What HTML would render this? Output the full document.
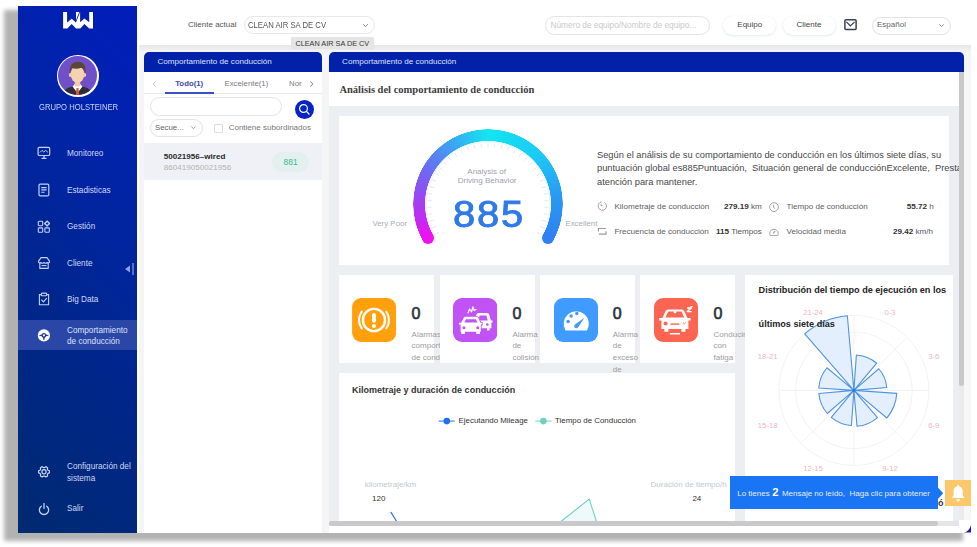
<!DOCTYPE html>
<html><head><meta charset="utf-8">
<style>
*{margin:0;padding:0;box-sizing:border-box}
html,body{width:977px;height:547px;overflow:hidden;background:#fff;font-family:"Liberation Sans",sans-serif;color:#333}
.a{position:absolute}
.t{position:absolute;white-space:nowrap;line-height:1}
#win{position:absolute;left:18px;top:6px;width:953px;height:527px;background:#fff;overflow:hidden}
#side{position:absolute;left:18px;top:6px;width:119px;height:527px;background:linear-gradient(225deg,#011dbb 0%,#0124a6 30%,#00268c 60%,#002a70 100%)}
.mi{position:absolute;left:67px;color:#cfd8f5;font-size:8.2px;line-height:11.5px;white-space:nowrap}
.ic{position:absolute;left:37px}
</style></head>
<body>
<div class="a" style="left:3.5px;top:10px;width:959.5px;height:531px;background:rgba(0,0,0,0.3);filter:blur(2.3px)"></div>
<div id="win"></div>
<!-- content bg -->
<div class="a" style="left:137px;top:45px;width:834px;height:488px;background:#f5f5f6"></div>
<div class="a" style="left:137px;top:45px;width:834px;height:7px;background:linear-gradient(#e7e7e7,#f4f4f5)"></div>
<div class="a" style="left:137px;top:45px;width:2px;height:488px;background:#fff"></div>
<!-- top bar -->
<div class="a" style="left:137px;top:6px;width:834px;height:39px;background:#fff"></div>


<!-- top bar content -->
<div class="t" style="left:188px;top:21px;font-size:8px;color:#555">Cliente actual</div>
<div class="a" style="left:243.5px;top:16.3px;width:131.2px;height:18.2px;border:1px solid #e6e8f0;border-radius:9.5px;background:#fff"></div>
<div class="t" style="left:248.4px;top:21.2px;font-size:8.3px;color:#555;transform:scaleX(0.93);transform-origin:0 0">CLEAN AIR SA DE CV</div>
<svg class="a" style="left:361px;top:22px" width="9" height="7" viewBox="0 0 9 7"><path d="M2.2,2.2 L4.5,4.6 L6.8,2.2" fill="none" stroke="#777" stroke-width="0.9"/></svg>
<div class="a" style="left:291.3px;top:36.8px;width:82.7px;height:12.6px;background:#e5e5e5;border-radius:2px;box-shadow:0 0 1px rgba(0,0,0,0.1)"></div>
<div class="t" style="left:295.4px;top:39.8px;font-size:7.3px;color:#383838">CLEAN AIR SA DE CV</div>

<div class="a" style="left:544.7px;top:16.3px;width:165px;height:18.4px;border:1px solid #e4e4e6;border-radius:9.5px;background:#fff"></div>
<div class="t" style="left:550.5px;top:21.2px;font-size:8.3px;color:#c9c9cc">Número de equipo/Nombre de equipo...</div>
<div class="a" style="left:722.7px;top:16.3px;width:53.7px;height:18.7px;border-radius:9.5px;background:#fff;box-shadow:0 1px 2.5px rgba(90,120,210,0.16),0 0 0.5px rgba(180,190,220,0.35)"></div>
<div class="t" style="left:737.3px;top:21.3px;font-size:8px;color:#444">Equipo</div>
<div class="a" style="left:782.6px;top:16.3px;width:53.2px;height:18.7px;border-radius:9.5px;background:#fff;box-shadow:0 1px 2.5px rgba(90,120,210,0.16),0 0 0.5px rgba(180,190,220,0.35)"></div>
<div class="t" style="left:796.5px;top:21.3px;font-size:8px;color:#444">Cliente</div>
<svg class="a" style="left:843px;top:18px" width="15" height="13" viewBox="0 0 15 13"><rect x="1.9" y="1.8" width="11.2" height="9.6" rx="1" fill="none" stroke="#3a3f55" stroke-width="1.5"/><path d="M3.4,3.9 L7.4,7.9 L11.6,3.9" fill="none" stroke="#3a3f55" stroke-width="1.3"/></svg>
<div class="a" style="left:871.8px;top:16.5px;width:79px;height:18px;border:1px solid #e2e2e4;border-radius:9.5px;background:#fff"></div>
<div class="t" style="left:877px;top:21.3px;font-size:8px;color:#666">Español</div>
<svg class="a" style="left:937px;top:22px" width="9" height="7" viewBox="0 0 9 7"><path d="M2.4,2.4 L4.5,4.5 L6.6,2.4" fill="none" stroke="#777" stroke-width="0.9"/></svg>

<!-- sidebar -->
<div id="side"></div>


<!-- sidebar content -->
<svg class="a" style="left:62px;top:11px" width="32" height="20" viewBox="0 0 32 20">
<path fill="#fff" d="M1.1,1 H5.1 V11.6 L9.7,7.8 L14,11.4 L18.1,1 V11.3 L22.4,7.5 L27.2,11.3 V1 H31 V17.6 H27.2 L22.4,13 L18.3,17.6 H14 L9.7,13.1 L5.3,17.6 H1.1 Z"/>
<path fill="#fff" d="M14,1 H17.2 L14,9.3 Z"/>
</svg>
<div class="a" style="left:57px;top:55px;width:41.5px;height:41.5px;border-radius:50%;background:#fff;"></div>
<svg class="a" style="left:58.25px;top:56.25px" width="39" height="39" viewBox="0 0 39 39">
<defs><clipPath id="avc"><circle cx="19.5" cy="19.5" r="19.5"/></clipPath></defs>
<g clip-path="url(#avc)">
<rect width="39" height="39" fill="#7050c8"/><g transform="translate(19.5 39) scale(1.1) translate(-19.5 -35.8)">
<path d="M5,39 C6,31 10,29 15,28 L19.5,31 L24,28 C29,29 33,31 34,39 Z" fill="#2e2d35"/>
<path d="M15,28 L19.5,34 L24,28 L22,26 H17 Z" fill="#fff"/>
<path d="M18.6,29.5 H20.4 L21,36 L19.5,38 L18,36 Z" fill="#e0553a"/>
<rect x="17" y="22" width="5" height="6" fill="#f2cba5"/>
<ellipse cx="19.5" cy="17" rx="6.3" ry="7.6" fill="#f6d3b0"/>
<ellipse cx="12.9" cy="17.5" rx="1.3" ry="2" fill="#f2cba5"/>
<ellipse cx="26.1" cy="17.5" rx="1.3" ry="2" fill="#f2cba5"/>
<path d="M12.5,17 C11.5,9 15,5.5 20,5.5 C25,5.5 28,9 26.5,17 C26,13 25,12 23,11 C20,12.5 16,12 14.5,11 C13.3,12.5 13,14 12.5,17 Z" fill="#5b4636"/>
</g></g></svg>
<div class="t" style="left:39.2px;top:104.2px;font-size:8.2px;color:#c9d5f7;transform:scaleX(0.935);transform-origin:0 0">GRUPO HOLSTEINER</div>

<div class="a" style="left:18px;top:320px;width:119px;height:30px;background:#2a47a8"></div>

<svg class="ic a" style="left:37px;top:146px" width="14" height="14" viewBox="0 0 14 14" fill="none" stroke="#c3d2f6" stroke-width="1.2">
<rect x="1.1" y="1.3" width="11.6" height="8.2" rx="1.3"/><path d="M3,6.4 L5,4.4 L6.8,6 L8.5,4.4 L10.8,6.2" stroke-width="1"/><path d="M7,9.5 V12 M4.5,12.3 H9.5"/>
</svg>
<div class="mi" style="top:148.1px">Monitoreo</div>

<svg class="ic a" style="left:37px;top:183px" width="14" height="14" viewBox="0 0 14 14" fill="none" stroke="#c3d2f6" stroke-width="1.2">
<rect x="2" y="1.1" width="9.8" height="11.8" rx="1.2"/><path d="M4.2,4.6 H9.6 M4.2,6.9 H9.6 M4.2,9.2 H7.6" stroke-width="1.1"/>
</svg>
<div class="mi" style="top:184.6px">Estadisticas</div>

<svg class="ic a" style="left:37px;top:220px" width="14" height="14" viewBox="0 0 14 14" fill="none" stroke="#c3d2f6" stroke-width="1.1">
<rect x="1.3" y="1.3" width="4.4" height="4.4" rx="0.9"/><rect x="1.3" y="7.9" width="4.4" height="4.4" rx="0.9"/><rect x="7.9" y="7.9" width="4.4" height="4.4" rx="0.9"/><path d="M10.1,1.1 L12.5,3.5 L10.1,5.9 L7.7,3.5 Z" stroke-linejoin="round" stroke-width="1.6" stroke-opacity="0.35"/><path d="M10.1,1.1 L12.5,3.5 L10.1,5.9 L7.7,3.5 Z" stroke-linejoin="round"/>
</svg>
<div class="mi" style="top:221.1px">Gestión</div>

<svg class="ic a" style="left:37px;top:256px" width="14" height="14" viewBox="0 0 14 14" fill="none" stroke="#c3d2f6" stroke-width="1.1" stroke-linejoin="round">
<path d="M4,1.6 H10 L12.6,5.4 C12.6,6.8 11.2,7.3 10.3,6.5 C9.5,7.3 8,7.3 7,6.5 C6,7.3 4.5,7.3 3.7,6.5 C2.8,7.3 1.4,6.8 1.4,5.4 Z"/><path d="M2.8,7 V12.4 H11.2 V7"/><path d="M4.6,9.6 H9.4"/>
</svg>
<div class="mi" style="top:257.6px">Cliente</div>
<svg class="a" style="left:124px;top:262px" width="11" height="14" viewBox="0 0 11 14"><path d="M1,7 L6,3.6 V10.4 Z" fill="#8ea3e0"/><rect x="8.4" y="1" width="1.2" height="12" fill="#8ea3e0"/></svg>

<svg class="ic a" style="left:37px;top:292px" width="14" height="14" viewBox="0 0 14 14" fill="none" stroke="#c3d2f6" stroke-width="1.1">
<path d="M4.2,2.6 H2.4 V12.8 H11.6 V2.6 H9.8"/><rect x="4.4" y="1.1" width="5.2" height="2.6" rx="0.7"/><path d="M4.4,7.7 L6.4,9.8 L9.8,6.2" stroke-width="1.2"/>
</svg>
<div class="mi" style="top:294.1px">Big Data</div>

<svg class="ic a" style="left:37px;top:328px" width="14" height="14" viewBox="0 0 14 14">
<circle cx="6.9" cy="7.4" r="6.1" fill="#fff"/><path d="M1.7,7.4 L4.5,6.5 H9.3 L12.1,7.4 L9.3,8.3 H4.5 Z" fill="#22349a"/><circle cx="6.9" cy="7.4" r="2.3" fill="#22349a"/><circle cx="6.9" cy="7.4" r="1.1" fill="#fff"/><path d="M6.1,8.8 H7.7 L7.6,11.8 H6.2 Z" fill="#22349a"/>
</svg>
<div class="mi" style="top:324.7px;color:#dbe2f7">Comportamiento<br>de conducción</div>

<svg class="ic a" style="left:37px;top:465px" width="15" height="15" viewBox="0 0 15 15" fill="none" stroke="#c6d5f6" stroke-width="1.2">
<path d="M8.79,1.60 L10.61,2.65 L10.34,4.09 L11.01,5.26 L12.40,5.75 L12.40,7.85 L11.01,8.34 L10.34,9.51 L10.61,10.95 L8.79,12.00 L7.67,11.05 L6.33,11.05 L5.21,12.00 L3.39,10.95 L3.66,9.51 L2.99,8.34 L1.60,7.85 L1.60,5.75 L2.99,5.26 L3.66,4.09 L3.39,2.65 L5.21,1.60 L6.33,2.55 L7.67,2.55 Z" stroke-linejoin="round"/><circle cx="7.0" cy="6.8" r="2.1"/>
</svg>
<div class="mi" style="top:461px">Configuración del<br>sistema</div>

<svg class="ic a" style="left:37px;top:502px" width="14" height="14" viewBox="0 0 14 14" fill="none" stroke="#c3d2f6" stroke-width="1.3" stroke-linecap="round">
<path d="M4.3,4.2 A4.6,4.6 0 1 0 9.7,4.2"/><path d="M7,1.6 V6.6"/>
</svg>
<div class="mi" style="top:502.5px">Salir</div>

<!-- middle panel -->
<div class="a" style="left:144px;top:52px;width:178px;height:481px;background:#fff"></div>
<div class="a" style="left:144px;top:52px;width:178px;height:20px;background:#0121a8;border-radius:5px 5px 0 0"></div>


<!-- middle panel content -->
<div class="t" style="left:157.5px;top:58.4px;font-size:8.1px;color:#dce3ff">Comportamiento de conducción</div>
<svg class="a" style="left:150px;top:79px" width="9" height="10" viewBox="0 0 9 10"><path d="M5.6,2.4 L3.2,5 L5.6,7.6" fill="none" stroke="#b5b5b5" stroke-width="0.9"/></svg>
<div class="t" style="left:175.2px;top:79.6px;font-size:7.8px;font-weight:bold;color:#3a4aa8">Todo(1)</div>
<div class="t" style="left:224.5px;top:79.6px;font-size:7.8px;color:#7a7a7a">Excelente(1)</div>
<div style="position:absolute;left:289px;top:79.6px;width:12.5px;overflow:hidden;white-space:nowrap;font-size:7.8px;line-height:1;color:#7a7a7a">Normal</div>
<svg class="a" style="left:307px;top:79px" width="9" height="10" viewBox="0 0 9 10"><path d="M3.2,2.4 L5.8,5 L3.2,7.6" fill="none" stroke="#666" stroke-width="0.9"/></svg>
<div class="a" style="left:144px;top:93px;width:178px;height:0.8px;background:#e9e9eb"></div>
<div class="a" style="left:165.2px;top:91.9px;width:48.8px;height:1.9px;background:#3b50c4"></div>
<div class="a" style="left:149.9px;top:97.4px;width:132px;height:18.4px;border:1px solid #e3e3e5;border-radius:9.5px"></div>
<div class="a" style="left:295px;top:99.6px;width:19px;height:19px;border-radius:50%;background:#0624c6"></div>
<svg class="a" style="left:295px;top:99.6px" width="19" height="19" viewBox="0 0 19 19"><circle cx="8.5" cy="8.5" r="3.9" fill="none" stroke="#fff" stroke-width="1.2"/><path d="M11.4,11.4 L14,14" stroke="#fff" stroke-width="1.3" stroke-linecap="round"/></svg>
<div class="a" style="left:150px;top:119px;width:52.6px;height:18.4px;border:1px solid #e3e3e5;border-radius:9.5px"></div>
<div class="t" style="left:155px;top:124.4px;font-size:7.8px;color:#666">Secue...</div>
<svg class="a" style="left:188.5px;top:124px" width="9" height="8" viewBox="0 0 9 8"><path d="M2.4,2.6 L4.5,4.7 L6.6,2.6" fill="none" stroke="#888" stroke-width="0.9"/></svg>
<div class="a" style="left:214px;top:124.1px;width:9.2px;height:9.2px;border:1px solid #dcdcdc;border-radius:1px"></div>
<div class="t" style="left:228.7px;top:124.3px;font-size:8px;color:#777">Contiene subordinados</div>
<div class="a" style="left:144px;top:142.8px;width:178px;height:36.9px;background:#f0f1f6"></div>
<div class="t" style="left:163.7px;top:152.8px;font-size:8.1px;font-weight:bold;color:#2a2a2a">50021956–wired</div>
<div class="t" style="left:163.7px;top:163.6px;font-size:8.1px;color:#b3b3b3">860419050021956</div>
<div class="a" style="left:271.9px;top:151.5px;width:37.4px;height:20.1px;border-radius:10px;background:#e2f0ee"></div>
<div class="t" style="left:283.6px;top:157.6px;font-size:8.4px;color:#3cb98a">881</div>

<!-- right panel -->
<div class="a" style="left:329px;top:52px;width:635px;height:20px;background:#0121a8;border-radius:5px 5px 0 0"></div>
<div class="a" style="left:329px;top:72px;width:630px;height:461px;background:#eceef1"></div>
<div class="a" style="left:329px;top:72px;width:630px;height:34px;background:#fff"></div>
<div class="a" style="left:959px;top:72px;width:12px;height:461px;background:#f7f7f8"></div>
<div class="a" style="left:959px;top:72px;width:5px;height:448px;background:#ebebed"></div>
<div class="a" style="left:959px;top:520px;width:12px;height:13px;background:#fff"></div>
<div class="a" style="left:959px;top:72px;width:5px;height:314px;background:#c9c9cb;border-radius:0 0 3px 3px"></div>

<!-- cards -->
<div class="a" style="left:339px;top:116px;width:610px;height:149px;background:#fff"></div>



<!-- right panel content -->
<div class="t" style="left:342.1px;top:58.4px;font-size:8.1px;color:#dce3ff">Comportamiento de conducción</div>
<div class="t" style="left:339.4px;top:84.6px;font-size:10.5px;font-weight:bold;font-family:'Liberation Serif',serif;color:#3d3d3d">Análisis del comportamiento de conducción</div>

<!-- gauge -->
<div class="a" style="left:413px;top:128.9px;width:150px;height:150px;border-radius:50%;background:conic-gradient(from 240deg,#ec12ef 0deg,#a43ef2 30deg,#6a6cf2 60deg,#3aa6f2 90deg,#12e6f0 120deg,#1ccaf5 165deg,#2a98f2 205deg,#2f80f0 240deg,transparent 240deg);-webkit-mask:radial-gradient(circle,transparent 60px,#000 68px,transparent 78px);filter:blur(7px);opacity:0.3"></div>
<div class="a" style="left:413px;top:128.9px;width:150px;height:150px;border-radius:50%;background:conic-gradient(from 240deg,#ec12ef 0deg,#a43ef2 30deg,#6a6cf2 60deg,#3aa6f2 90deg,#12e6f0 120deg,#1ccaf5 165deg,#2a98f2 205deg,#2f80f0 240deg,transparent 240deg);-webkit-mask:radial-gradient(circle,transparent 62.8px,#000 63.3px,#000 74.5px,transparent 75px)"></div>
<div class="a" style="left:422.24px;top:232.40px;width:12px;height:12px;border-radius:50%;background:#ec12ef"></div>
<div class="a" style="left:541.76px;top:232.40px;width:12px;height:12px;border-radius:50%;background:#2f80f0"></div>
<svg class="a" style="left:400px;top:115px" width="180" height="150" viewBox="0 0 180 150"><g stroke="#c8d4f2" stroke-width="0.9" opacity="0.6"><line x1="39.07" y1="117.15" x2="35.61" y2="119.15"/><line x1="36.12" y1="111.28" x2="32.45" y2="112.86"/><line x1="33.87" y1="105.10" x2="30.04" y2="106.25"/><line x1="32.36" y1="98.71" x2="28.42" y2="99.41"/><line x1="31.60" y1="92.19" x2="27.60" y2="92.42"/><line x1="31.60" y1="85.61" x2="27.60" y2="85.38"/><line x1="32.36" y1="79.09" x2="28.42" y2="78.39"/><line x1="33.87" y1="72.70" x2="30.04" y2="71.55"/><line x1="36.12" y1="66.52" x2="32.45" y2="64.94"/><line x1="39.07" y1="60.65" x2="35.61" y2="58.65"/><line x1="42.68" y1="55.16" x2="39.47" y2="52.77"/><line x1="46.90" y1="50.13" x2="43.99" y2="47.38"/><line x1="51.68" y1="45.62" x2="49.11" y2="42.55"/><line x1="56.95" y1="41.69" x2="54.75" y2="38.35"/><line x1="62.64" y1="38.41" x2="60.85" y2="34.84"/><line x1="68.68" y1="35.81" x2="67.31" y2="32.05"/><line x1="74.97" y1="33.92" x2="74.05" y2="30.03"/><line x1="81.44" y1="32.78" x2="80.98" y2="28.81"/><line x1="88.00" y1="32.40" x2="88.00" y2="28.40"/><line x1="94.56" y1="32.78" x2="95.02" y2="28.81"/><line x1="101.03" y1="33.92" x2="101.95" y2="30.03"/><line x1="107.32" y1="35.81" x2="108.69" y2="32.05"/><line x1="113.36" y1="38.41" x2="115.15" y2="34.84"/><line x1="119.05" y1="41.69" x2="121.25" y2="38.35"/><line x1="124.32" y1="45.62" x2="126.89" y2="42.55"/><line x1="129.10" y1="50.13" x2="132.01" y2="47.38"/><line x1="133.32" y1="55.16" x2="136.53" y2="52.77"/><line x1="136.93" y1="60.65" x2="140.39" y2="58.65"/><line x1="139.88" y1="66.52" x2="143.55" y2="64.94"/><line x1="142.13" y1="72.70" x2="145.96" y2="71.55"/><line x1="143.64" y1="79.09" x2="147.58" y2="78.39"/><line x1="144.40" y1="85.61" x2="148.40" y2="85.38"/><line x1="144.40" y1="92.19" x2="148.40" y2="92.42"/><line x1="143.64" y1="98.71" x2="147.58" y2="99.41"/><line x1="142.13" y1="105.10" x2="145.96" y2="106.25"/><line x1="139.88" y1="111.28" x2="143.55" y2="112.86"/><line x1="136.93" y1="117.15" x2="140.39" y2="119.15"/></g></svg>
<div class="t" style="left:467.3px;top:167.6px;font-size:8px;color:#9ba1ad">Analysis of</div>
<div class="t" style="left:457.8px;top:176.6px;font-size:8px;color:#9ba1ad">Driving Behavior</div>
<div class="t" style="left:453.2px;top:196px;font-size:37px;color:#2f7ae8;letter-spacing:1.6px;-webkit-text-stroke:0.9px #2f7ae8;transform:scaleX(1.08);transform-origin:0 0">885</div>
<div class="t" style="left:372.4px;top:219.6px;font-size:7.9px;color:#a7aebb">Very Poor</div>
<div class="t" style="left:565.4px;top:219.6px;font-size:7.9px;color:#a7aebb">Excellent</div>

<!-- summary text -->
<div class="a" style="left:597px;top:148.5px;width:362px;height:40px;overflow:hidden;font-size:9.3px;line-height:13.6px;color:#474747;white-space:nowrap">Según el análisis de su comportamiento de conducción en los últimos siete días, su<br>puntuación global es885Puntuación,&nbsp;&nbsp;Situación general de conducciónExcelente,&nbsp;&nbsp;Prestar<br>atención para mantener.</div>


<!-- stats -->
<svg class="a" style="left:596px;top:200px" width="12" height="12" viewBox="0 0 12 12" fill="none" stroke="#9a9a9a" stroke-width="0.9"><path d="M8.4,2.4 A4.2,4.2 0 1 1 5.6,1.9"/><path d="M4.6,4.6 L6.2,6.2" stroke-width="1.1"/></svg>
<div class="t" style="left:614.4px;top:203.4px;font-size:8.1px;color:#5e5e5e">Kilometraje de conducción</div>
<div class="t" style="left:724px;top:203.2px;font-size:8.1px;color:#555"><b style="color:#333">279.19</b> km</div>
<svg class="a" style="left:768px;top:201px" width="12" height="12" viewBox="0 0 12 12" fill="none" stroke="#9a9a9a" stroke-width="0.9"><circle cx="6" cy="6.1" r="4.4"/><path d="M5.6,3.6 V6.4 L7.2,7.6"/></svg>
<div class="t" style="left:786.5px;top:203.4px;font-size:8.1px;color:#5e5e5e">Tiempo de conducción</div>
<div class="t" style="left:906.8px;top:203.2px;font-size:8.1px;color:#555"><b style="color:#333">55.72</b> h</div>
<svg class="a" style="left:596px;top:226px" width="12" height="12" viewBox="0 0 12 12" fill="none" stroke="#9a9a9a" stroke-width="1.1"><path d="M2.4,5.6 V2.5 H9.8 M10,5.2 V8.1 H2.8"/></svg>
<div class="t" style="left:614.4px;top:228.2px;font-size:8.1px;color:#5e5e5e">Frecuencia de conducción</div>
<div class="t" style="left:716px;top:228px;font-size:8.1px;color:#555"><b style="color:#333">115</b> Tiempos</div>
<svg class="a" style="left:768px;top:226px" width="12" height="12" viewBox="0 0 12 12" fill="none" stroke="#9a9a9a" stroke-width="0.9"><path d="M2.2,9.6 A4.3,4.3 0 1 1 9.8,9.6 Z"/><path d="M5.2,7.4 L7.2,5.2" stroke-width="1.1"/></svg>
<div class="t" style="left:786.5px;top:228.2px;font-size:8.1px;color:#5e5e5e">Velocidad media</div>
<div class="t" style="left:892.9px;top:228px;font-size:8.1px;color:#555"><b style="color:#333">29.42</b> km/h</div>

<!-- alarm cards -->
<div class="a" style="left:339px;top:275px;width:95px;height:88px;background:#fff"></div><svg class="a" style="left:352.3px;top:297.7px" width="44.2" height="44" viewBox="0 0 44 44"><rect width="44" height="44" rx="9" fill="#ffa00c"/>
<g fill="none" stroke="#fff"><circle cx="21.9" cy="22" r="11.1" stroke-width="2.4"/><path d="M9.6,13.6 A14.4,14.4 0 0 0 9.6,30.4 M34.2,13.6 A14.4,14.4 0 0 1 34.2,30.4" stroke-width="2.1" stroke-linecap="round"/></g>
<rect x="20" y="15" width="3.8" height="9.8" rx="1.7" fill="#fff"/><circle cx="21.9" cy="28.1" r="2" fill="#fff"/></svg><div class="t" style="left:411.6px;top:305.6px;font-size:16px;color:#2b2f3a;-webkit-text-stroke:0.6px #2b2f3a">0</div><div class="a" style="left:411.6px;top:328.6px;font-size:8px;line-height:11.8px;color:#9c9c9c;white-space:nowrap">Alarmas<br>comportamiento<br>de conducción</div>
<div class="a" style="left:440px;top:275px;width:95px;height:88px;background:#fff"></div><svg class="a" style="left:452.7px;top:297.7px" width="44.4" height="44" viewBox="0 0 44.4 44"><rect width="44.4" height="44" rx="9" fill="#c152f6"/>
<path d="M21,24 L23.2,17.2 C23.6,15.8 24.3,15.1 25.6,15.1 H34 C35.3,15.1 36,15.8 36.4,17.2 L38,22.6 H39.5 V24.6 H38.4 V30.2 H36.6 V32.4 H34 V30.2 H26 Z" fill="#fff"/>
<path d="M25.4,22.6 L26.6,17.4 H33.4 L34.8,22.6 Z" fill="#c152f6"/><circle cx="34.3" cy="26.5" r="1.3" fill="#c152f6"/>
<path d="M8.2,24.7 L10.6,19.9 C11,19.1 11.6,18.7 12.5,18.7 H23.4 C24.3,18.7 24.9,19.1 25.3,19.9 L27.6,24.7 H28.8 V26.6 H27.8 V33.8 H27 V36.1 H23.3 V33.8 H11.9 V36.1 H8.2 V33.8 H7.6 V26.6 H5.9 V24.7 Z" fill="#fff" stroke="#c152f6" stroke-width="1.6" paint-order="stroke"/>
<path d="M11.4,24.5 L13,21.2 H22.9 L24.5,24.5 Z" fill="#c152f6"/><circle cx="11" cy="29.7" r="1.5" fill="#c152f6"/><circle cx="24.7" cy="29.7" r="1.5" fill="#c152f6"/>
<path d="M15,15 L16.6,11 L18.6,13.8 L19.8,8.8 L21.2,12.6 L23,11.4" fill="none" stroke="#fff" stroke-width="1.2" stroke-linejoin="round" stroke-linecap="round"/></svg><div class="t" style="left:512.4px;top:305.6px;font-size:16px;color:#2b2f3a;-webkit-text-stroke:0.6px #2b2f3a">0</div><div class="a" style="left:512.4px;top:328.6px;font-size:8px;line-height:11.8px;color:#9c9c9c;white-space:nowrap">Alarma<br>de<br>colisión</div>
<div class="a" style="left:540px;top:275px;width:95px;height:88px;background:#fff"></div><svg class="a" style="left:553.7px;top:297.7px" width="44" height="44" viewBox="0 0 44 44"><rect width="44" height="44" rx="9" fill="#3f9bfd"/>
<path d="M11.6,32.5 A12.6,12.6 0 1 1 33,32.5 Z" fill="#fff"/>
<circle cx="14.1" cy="23.4" r="1.75" fill="#3f9bfd"/><circle cx="17.1" cy="17.9" r="1.75" fill="#3f9bfd"/><circle cx="22.8" cy="15.6" r="1.75" fill="#3f9bfd"/>
<path d="M30.4,19.8 L24.2,29.2 C23.2,30.8 20.6,30.6 20.2,28.6 C20,27.6 20.5,26.7 21.3,26.2 Z" fill="#3f9bfd"/></svg><div class="t" style="left:612.7px;top:305.6px;font-size:16px;color:#2b2f3a;-webkit-text-stroke:0.6px #2b2f3a">0</div><div class="a" style="left:612.7px;top:328.6px;font-size:8px;line-height:11.8px;color:#9c9c9c;white-space:nowrap">Alarma<br>de<br>exceso<br>de</div>
<div class="a" style="left:640px;top:275px;width:95px;height:88px;background:#fff"></div><svg class="a" style="left:653.7px;top:297.7px" width="44" height="44" viewBox="0 0 44 44"><rect width="44" height="44" rx="9" fill="#fb6551"/>
<path d="M8.4,20 L11.4,13.6 C12,12.3 12.8,11.6 14.4,11.6 H27.4 C29,11.6 29.8,12.3 30.4,13.6 L33.4,20 H36.6 V22.6 H34.4 V31 H31.4 V33.8 H27.4 V31 H14.4 V33.8 H10.4 V31 H7.4 V22.6 H5.2 V20 Z" fill="#fff"/>
<path d="M11.6,19.6 L13.8,14.6 C14.2,13.8 14.6,13.6 15.4,13.6 H26.4 C27.2,13.6 27.6,13.8 28,14.6 L30.2,19.6 Z" fill="#fb6551"/>
<rect x="19.8" y="13" width="2.4" height="2.2" fill="#fff"/>
<circle cx="11.6" cy="25.4" r="2" fill="#fb6551"/><path d="M29,24.6 L30.4,25.8 L31.8,24.6" fill="none" stroke="#fb6551" stroke-width="0.9"/>
<rect x="16.4" y="25.4" width="9" height="1.4" fill="#fb6551"/>
<rect x="15.8" y="35" width="10.2" height="1.5" fill="#fff"/>
<path d="M33.2,10 H37.4 L33.2,13.6 H37.6 M36.4,8.6 H38.8" fill="none" stroke="#fff" stroke-width="1.4" stroke-linejoin="round"/></svg><div class="t" style="left:713.6px;top:305.6px;font-size:16px;color:#2b2f3a;-webkit-text-stroke:0.6px #2b2f3a">0</div><div class="a" style="left:713.6px;top:328.6px;font-size:8px;line-height:11.8px;color:#9c9c9c;white-space:nowrap">Conducir<br>con<br>fatiga</div>

<!-- chart card -->
<div class="a" style="left:339px;top:373px;width:396px;height:160px;background:#fff"></div>
<div class="t" style="left:352.1px;top:385.6px;font-size:9px;font-weight:bold;color:#333">Kilometraje y duración de conducción</div>
<svg class="a" style="left:436px;top:415.8px" width="20" height="10" viewBox="0 0 20 10"><path d="M2.6,5.1 H18.7" stroke="#2a72ee" stroke-width="1"/><circle cx="10.8" cy="5.1" r="3.3" fill="#1f6ff0"/></svg>
<div class="t" style="left:458.6px;top:417.2px;font-size:7.9px;color:#333">Ejecutando Mileage</div>
<svg class="a" style="left:533px;top:415.8px" width="20" height="10" viewBox="0 0 20 10"><path d="M2.3,5.1 H18.5" stroke="#7ad3cb" stroke-width="1"/><circle cx="10.4" cy="5.1" r="3.3" fill="#6fd0c8"/></svg>
<div class="t" style="left:555.1px;top:417.2px;font-size:7.9px;color:#333">Tiempo de Conducción</div>
<div class="t" style="left:364.7px;top:481.4px;font-size:8px;color:#c4c8d0">kilometraje/km</div>
<div class="t" style="left:372px;top:495px;font-size:8px;color:#333">120</div>
<div class="t" style="left:650.6px;top:481.4px;font-size:8px;color:#c4c8d0">Duración de tiempo/h</div>
<div class="t" style="left:692.4px;top:495px;font-size:8px;color:#333">24</div>
<svg class="a" style="left:339px;top:490px" width="396" height="43" viewBox="0 0 396 43">
<path d="M51.8,22 L58.6,33" stroke="#2a72ee" stroke-width="1.3" fill="none"/>
<path d="M220,33 L250.2,9.1 L258,33 Z" fill="#eefaf9"/>
<path d="M220,33 L250.2,9.1 L258,33" stroke="#6fd0c8" stroke-width="1.1" fill="none"/>
</svg>
<!-- polar card -->
<div class="a" style="left:745px;top:275px;width:208px;height:258px;background:#fff"></div>
<svg class="a" style="left:745px;top:275px" width="208" height="258" viewBox="0 0 208 258"><circle cx="108.89999999999998" cy="115.39999999999998" r="58.4" fill="none" stroke="#efefef" stroke-width="0.8"/><circle cx="108.89999999999998" cy="115.39999999999998" r="75" fill="none" stroke="#efefef" stroke-width="0.8"/><line x1="108.89999999999998" y1="115.39999999999998" x2="108.90" y2="40.40" stroke="#efefef" stroke-width="0.8"/><line x1="108.89999999999998" y1="115.39999999999998" x2="161.93" y2="62.37" stroke="#efefef" stroke-width="0.8"/><line x1="108.89999999999998" y1="115.39999999999998" x2="183.90" y2="115.40" stroke="#efefef" stroke-width="0.8"/><line x1="108.89999999999998" y1="115.39999999999998" x2="161.93" y2="168.43" stroke="#efefef" stroke-width="0.8"/><line x1="108.89999999999998" y1="115.39999999999998" x2="108.90" y2="190.40" stroke="#efefef" stroke-width="0.8"/><line x1="108.89999999999998" y1="115.39999999999998" x2="55.87" y2="168.43" stroke="#efefef" stroke-width="0.8"/><line x1="108.89999999999998" y1="115.39999999999998" x2="33.90" y2="115.40" stroke="#efefef" stroke-width="0.8"/><line x1="108.89999999999998" y1="115.39999999999998" x2="55.87" y2="62.37" stroke="#efefef" stroke-width="0.8"/><path d="M108.89999999999998,115.39999999999998 L111.38,79.99 A35.5,35.5 0 0 1 131.72,88.21 Z M108.89999999999998,115.39999999999998 L133.81,93.75 A33,33 0 0 1 141.77,112.52 Z M108.89999999999998,115.39999999999998 L151.80,118.40 A43,43 0 0 1 141.84,143.04 Z M108.89999999999998,115.39999999999998 L132.52,142.57 A36,36 0 0 1 112.04,151.26 Z M108.89999999999998,115.39999999999998 L106.44,150.51 A35.2,35.2 0 0 1 86.27,142.36 Z M108.89999999999998,115.39999999999998 L82.33,138.49 A35.2,35.2 0 0 1 73.83,118.47 Z M108.89999999999998,115.39999999999998 L73.79,112.94 A35.2,35.2 0 0 1 81.94,92.77 Z M108.89999999999998,115.39999999999998 L59.70,58.80 A75,75 0 0 1 102.36,40.69 Z" fill="rgba(220,235,252,0.8)" stroke="#4f94e0" stroke-width="1.1" stroke-linejoin="round"/><circle cx="108.89999999999998" cy="115.39999999999998" r="1.6" fill="#2f7ae8"/></svg><div class="t" style="left:793px;top:308.8px;width:40px;text-align:center;font-size:7.7px;color:#f4b3c2">21-24</div><div class="t" style="left:870px;top:308.8px;width:40px;text-align:center;font-size:7.7px;color:#f4b3c2">0-3</div><div class="t" style="left:913.7px;top:353px;width:40px;text-align:center;font-size:7.7px;color:#f4b3c2">3-6</div><div class="t" style="left:747.7px;top:353px;width:40px;text-align:center;font-size:7.7px;color:#f4b3c2">18-21</div><div class="t" style="left:913.7px;top:422px;width:40px;text-align:center;font-size:7.7px;color:#f4b3c2">6-9</div><div class="t" style="left:747.7px;top:422px;width:40px;text-align:center;font-size:7.7px;color:#f4b3c2">15-18</div><div class="t" style="left:793px;top:464.7px;width:40px;text-align:center;font-size:7.7px;color:#f4b3c2">12-15</div><div class="t" style="left:870px;top:464.7px;width:40px;text-align:center;font-size:7.7px;color:#f4b3c2">9-12</div>
<div class="t" style="left:758.6px;top:286px;font-size:9.1px;font-weight:bold;color:#222">Distribución del tiempo de ejecución en los</div>
<div class="t" style="left:758.6px;top:320.2px;font-size:9.1px;font-weight:bold;color:#222">últimos siete días</div>


<!-- bottom scrollbar -->
<div class="a" style="left:329px;top:521px;width:630px;height:5px;background:#e5e5e7"></div>
<div class="a" style="left:329px;top:521px;width:609px;height:5px;background:#c9c9cb;border-radius:3px"></div>
<div class="a" style="left:329px;top:526px;width:630px;height:7px;background:#fff"></div>


<!-- notification -->
<div class="a" style="left:730.1px;top:476.4px;width:207.5px;height:32.6px;background:#1a75f4"></div>
<svg class="a" style="left:937px;top:486px" width="8" height="15" viewBox="0 0 8 15"><path d="M0,0.5 L6.2,7.3 L0,14 Z" fill="#1a75f4"/></svg>
<div class="t" style="left:737.2px;top:490.2px;font-size:8px;color:#e3ecfd">Lo tienes</div>
<div class="t" style="left:772.2px;top:487.4px;font-size:11.3px;font-weight:bold;color:#fff">2</div>
<div class="t" style="left:781.9px;top:490.2px;font-size:8px;color:#e3ecfd">Mensaje no leído,&nbsp;&nbsp;Haga clic para obtener</div>
<div class="a" style="left:944.5px;top:480px;width:26.5px;height:25.5px;background:#fcc86b"></div>
<svg class="a" style="left:944.5px;top:481px" width="26.5" height="24.5" viewBox="0 0 26.5 24.5"><path d="M13.2,5.3 C10.2,5.3 8.6,7.6 8.6,10.6 V14.6 L6.8,17 H19.6 L17.8,14.6 V10.6 C17.8,7.6 16.2,5.3 13.2,5.3 Z" fill="#fff"/><path d="M11.2,18.2 C11.4,19.6 12.2,20.2 13.2,20.2 C14.2,20.2 15,19.6 15.2,18.2 Z" fill="#fff"/><rect x="12.4" y="3.8" width="1.6" height="2" rx="0.8" fill="#fff"/></svg>
<div class="t" style="left:938px;top:498.5px;font-size:9px;font-weight:bold;color:#333">ó</div>

<svg class="a" style="left:964px;top:525.3px" width="7" height="7.5" viewBox="0 0 7 7.5"><path d="M7,0 V7.5 H0 Q5.2,6.6 7,0 Z" fill="#3410b4"/></svg>
</body></html>
